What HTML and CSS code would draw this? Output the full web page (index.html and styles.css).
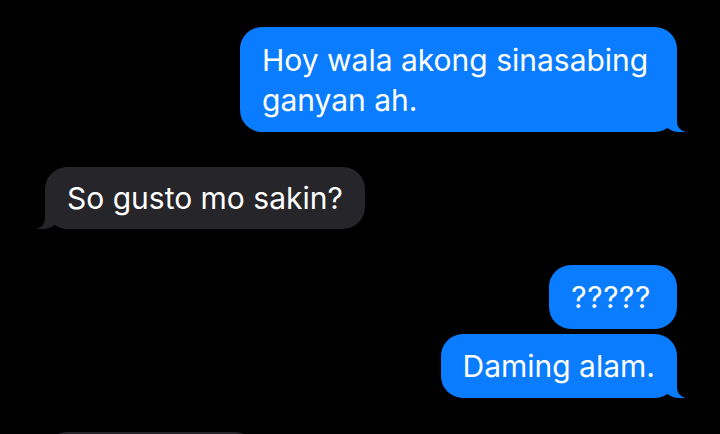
FILE: index.html
```html
<!DOCTYPE html>
<html lang="tl">
<head>
<meta charset="utf-8">
<title>Messages</title>
<link rel="stylesheet" href="styles.css">
</head>
<body>
<main class="thread">
  <div class="bubble sent b1 tail">Hoy wala akong sinasabing ganyan ah.</div>
  <div class="bubble received b2 tail">So gusto mo sakin?</div>
  <div class="bubble sent b3">?????</div>
  <div class="bubble sent b4 tail">Daming alam.</div>
  <div class="bubble received b5">&nbsp;</div>
</main>
</body>
</html>
```
FILE: styles.css
```css
html, body {
  margin: 0;
  padding: 0;
  background: #000;
  height: 100%;
  overflow: hidden;
}

.thread {
  display: flex;
  flex-direction: column;
  padding: 27px 43px 0 45px;
  font-family: Inter, "Noto Sans", sans-serif;
  font-size: 30px;
  line-height: 40px;
  color: #fff;
}

.bubble {
  position: relative;
  padding: 12px 22px;
  border-radius: 22px;
  max-width: 393px;
  width: fit-content;
}

.sent {
  align-self: flex-end;
  background: #0a7cff;
}

.received {
  align-self: flex-start;
  background: #26252a;
}

.b1 { padding: 13px 22px 12px; }
.b2 { margin-top: 35px; padding: 11px 22px; }
.b3 { margin-top: 36px; padding: 12px 26px 12px 22px; letter-spacing: 0.6px; }
.b4 { margin-top: 5px; }
.b5 { margin-top: 34px; width: 212px; box-sizing: border-box; }

.sent.tail::before,
.sent.tail::after,
.received.tail::before,
.received.tail::after {
  content: "";
  position: absolute;
  bottom: 0;
  height: 22px;
}

.sent.tail::before {
  right: -8px;
  width: 22px;
  background: #0a7cff;
  border-bottom-left-radius: 16px 14px;
}

.sent.tail::after {
  right: -26px;
  width: 26px;
  background: #000;
  border-bottom-left-radius: 10px;
}

.received.tail::before {
  left: -8px;
  width: 22px;
  background: #26252a;
  border-bottom-right-radius: 16px 14px;
}

.received.tail::after {
  left: -26px;
  width: 26px;
  background: #000;
  border-bottom-right-radius: 10px;
}
```
